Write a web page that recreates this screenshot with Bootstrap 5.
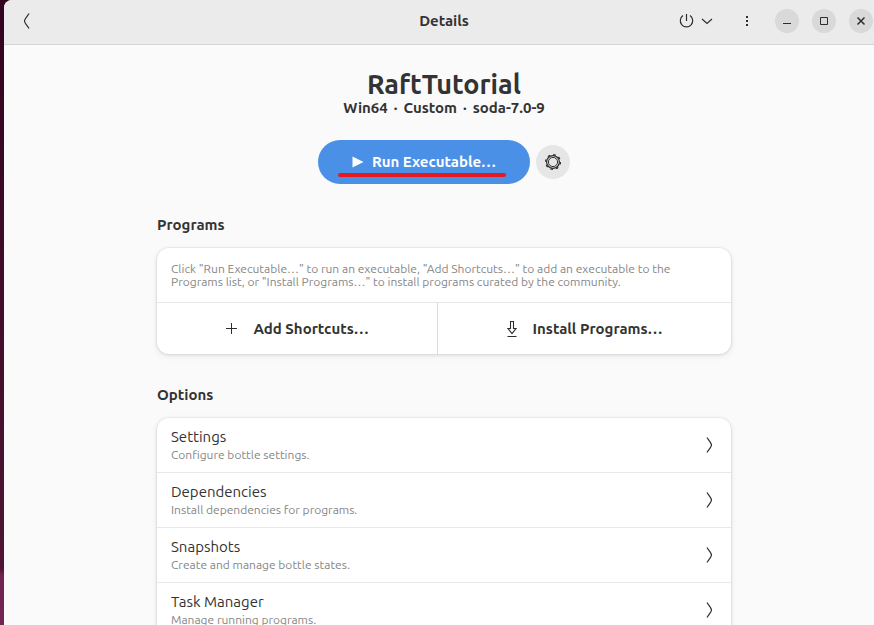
<!DOCTYPE html>
<html lang="en">
<head>
<meta charset="utf-8">
<meta name="viewport" content="width=device-width, initial-scale=1">
<title>Details</title>
<link href="https://cdn.jsdelivr.net/npm/bootstrap@5.3.0/dist/css/bootstrap.min.css" rel="stylesheet">
<style>
body { font-family: Ubuntu, "Noto Sans", sans-serif; font-size: 15px; line-height: 20px; color: #333; background: linear-gradient(#32041f 0, #4f1533 91%, #6f2350 92%, #742552 100%); }
svg { display: block; fill: none; stroke: #2e2e2e; flex: none; }
.desktop { padding-left: 4px; }
.app-window { background: #fafafa; border-top-left-radius: 8px; margin-right: -10px; }
.titlebar { height: 45px; background: #ebebeb; border-bottom: 1px solid #d6d6d6; padding: 0 11px 3px; }
.titlebar .side { flex: 1 1 0; }
.flat { background: none; border: 0; padding: 0; color: inherit; }
.round-btn { width: 24px; height: 24px; border-radius: 50%; background: #d9d9d9; border: 0; padding: 0; }
.win-controls { gap: 13px; }
.power-btn { gap: 5px; margin-right: 20px; }
.content-col { width: 574px; max-width: 100%; }
.bottle { padding-top: 23px; }
.bottle-name { font-size: 27px; line-height: 32px; font-weight: 700; margin: 0; }
.bottle-info { line-height: 16px; font-weight: 700; margin: 0; gap: 6px; }
.launch { gap: 6px; }
.run-btn, .run-btn:hover { width: 212px; height: 44px; border-radius: 22px; background: #4a90e6; color: #fff; border: 0; font-size: 15px; font-weight: 700; padding: 0; }
.run-btn svg { fill: #fff; stroke: none; }
.marker { left: 20px; right: 24px; bottom: 7px; height: 4px; border-radius: 2px; background: #e5181d; }
.gear-btn { width: 34px; height: 34px; background: #e6e6e6; }
.group { padding-top: 31px; }
.group-title { font-size: 15px; line-height: 20px; font-weight: 700; margin: 0; }
.panel { margin-top: 13px; border: 0; border-radius: 12px; overflow: hidden; box-shadow: 0 0 0 1px rgba(0,0,0,.03), 0 1px 3px 1px rgba(0,0,0,.07), 0 2px 6px 2px rgba(0,0,0,.03); background: #fff; }
.hint { font-size: 12px; line-height: 13px; color: #868686; padding: 14px; margin: 0; }
.actions { border-top: 1px solid #e6e6e6; height: 52px; }
.action-btn { font-weight: 700; flex: 1 1 auto; }
.action-btn + .action-btn { border-left: 1px solid #dadada; }
.option-row, .option-row:hover { height: 55px; padding: 0 14px; border: 0; border-bottom: 1px solid #e9e9e9; color: #333; background: #fff; }
.option-sub { font-size: 12px; line-height: 16px; color: #868686; }
</style>
<script src="https://cdn.jsdelivr.net/npm/bootstrap@5.3.0/dist/js/bootstrap.bundle.min.js"></script>
</head>
<body>
<div class="desktop vh-100 overflow-hidden">
<div class="app-window h-100 overflow-hidden">
  <header class="titlebar d-flex align-items-center">
    <div class="side d-flex">
      <button class="flat ms-1" type="button" aria-label="Back"><svg width="16" height="16" viewBox="0 0 16 16"><path d="M10 .5C9 2.500 5.500 6 5.500 8s3.500 5.500 4.500 7.500" stroke-width="1.200"/></svg></button>
    </div>
    <h1 class="group-title">Details</h1>
    <div class="side d-flex align-items-center justify-content-end">
      <button class="flat power-btn d-flex align-items-center" type="button" aria-label="Power">
        <svg width="16" height="16" viewBox="0 0 16 16"><path d="M5 2.600a6.200 6.200 0 1 0 7 0M8.500 1v7" stroke-width="1.200"/></svg>
        <svg width="16" height="16" viewBox="0 0 16 16"><path d="M3 6l5 4.500L13 6" stroke-width="1.200"/></svg>
      </button>
      <button class="flat me-3" type="button" aria-label="Menu"><svg width="24" height="16" viewBox="0 0 24 16"><path d="M11 3h2v2h-2zM11 7h2v2h-2zM11 11h2v2h-2z" fill="#2e2e2e" stroke="none"/></svg></button>
      <div class="win-controls d-flex">
        <button class="round-btn d-flex align-items-center justify-content-center" type="button" aria-label="Minimize"><svg width="16" height="16" viewBox="0 0 16 16"><path d="M4 10.500h8"/></svg></button>
        <button class="round-btn d-flex align-items-center justify-content-center" type="button" aria-label="Maximize"><svg width="16" height="16" viewBox="0 0 16 16"><path d="M4.500 4.500h7v7h-7z"/></svg></button>
        <button class="round-btn d-flex align-items-center justify-content-center" type="button" aria-label="Close"><svg width="16" height="16" viewBox="0 0 16 16"><path d="M4.500 4.500l7 7M11.500 4.500l-7 7" stroke-width="1.500"/></svg></button>
      </div>
    </div>
  </header>
  <main class="content-col mx-auto">
    <section class="bottle text-center">
      <h2 class="bottle-name">RaftTutorial</h2>
      <p class="bottle-info d-flex justify-content-center"><span>Win64</span><span>·</span><span>Custom</span><span>·</span><span>soda-7.0-9</span></p>
      <div class="launch d-flex justify-content-center align-items-center pt-4">
        <button class="btn run-btn position-relative d-flex align-items-center justify-content-center gap-2" type="button">
          <svg width="12" height="12" viewBox="0 0 12 12"><path d="M.5 .5 11.500 6 .5 11.500z"/></svg>Run Executable…
          <span class="marker position-absolute"></span>
        </button>
        <button class="round-btn gear-btn d-flex align-items-center justify-content-center" type="button" aria-label="Launch options"><svg width="18" height="18" viewBox="0 0 18 18"><circle cx="9" cy="9" r="4.600"/><circle cx="9" cy="9" r="6.400" stroke-width="1.200"/><circle cx="9" cy="9" r="7.400" stroke-width="1.300" stroke-dasharray="2.500 3.312"/></svg></button>
      </div>
    </section>
    <section class="group">
      <h3 class="group-title">Programs</h3>
      <div class="card panel">
        <p class="hint">Click "Run Executable…" to run an executable, "Add Shortcuts…" to add an executable to the Programs list, or "Install Programs…" to install programs curated by the community.</p>
        <div class="actions d-flex">
          <button class="flat action-btn d-flex align-items-center justify-content-center gap-3" type="button"><svg width="12" height="12" viewBox="0 0 12 12"><path d="M6.500 0v11M1 5.500h11"/></svg>Add Shortcuts…</button>
          <button class="flat action-btn d-flex align-items-center justify-content-center gap-3" type="button"><svg width="10" height="16" viewBox="0 0 10 16"><path d="M3.500 .5h3v7h2.500L5 12.500 1 7.500h2.500zM.5 15.500h9" stroke-width="1.100"/></svg>Install Programs…</button>
        </div>
      </div>
    </section>
    <section class="group">
      <h3 class="group-title">Options</h3>
      <div class="list-group panel">
        <a href="#settings" class="list-group-item option-row d-flex align-items-center justify-content-between">
          <span><span class="d-block">Settings</span><span class="option-sub d-block">Configure bottle settings.</span></span>
          <svg width="16" height="16" viewBox="0 0 16 16"><path d="M6 .5C7 2.500 10.500 6 10.500 8S7 13.500 6 15.500" stroke-width="1.200"/></svg>
        </a>
        <a href="#dependencies" class="list-group-item option-row d-flex align-items-center justify-content-between">
          <span><span class="d-block">Dependencies</span><span class="option-sub d-block">Install dependencies for programs.</span></span>
          <svg width="16" height="16" viewBox="0 0 16 16"><path d="M6 .5C7 2.500 10.500 6 10.500 8S7 13.500 6 15.500" stroke-width="1.200"/></svg>
        </a>
        <a href="#snapshots" class="list-group-item option-row d-flex align-items-center justify-content-between">
          <span><span class="d-block">Snapshots</span><span class="option-sub d-block">Create and manage bottle states.</span></span>
          <svg width="16" height="16" viewBox="0 0 16 16"><path d="M6 .5C7 2.500 10.500 6 10.500 8S7 13.500 6 15.500" stroke-width="1.200"/></svg>
        </a>
        <a href="#tasks" class="list-group-item option-row d-flex align-items-center justify-content-between">
          <span><span class="d-block">Task Manager</span><span class="option-sub d-block">Manage running programs.</span></span>
          <svg width="16" height="16" viewBox="0 0 16 16"><path d="M6 .5C7 2.500 10.500 6 10.500 8S7 13.500 6 15.500" stroke-width="1.200"/></svg>
        </a>
      </div>
    </section>
  </main>
</div>
</div>
</body>
</html>
